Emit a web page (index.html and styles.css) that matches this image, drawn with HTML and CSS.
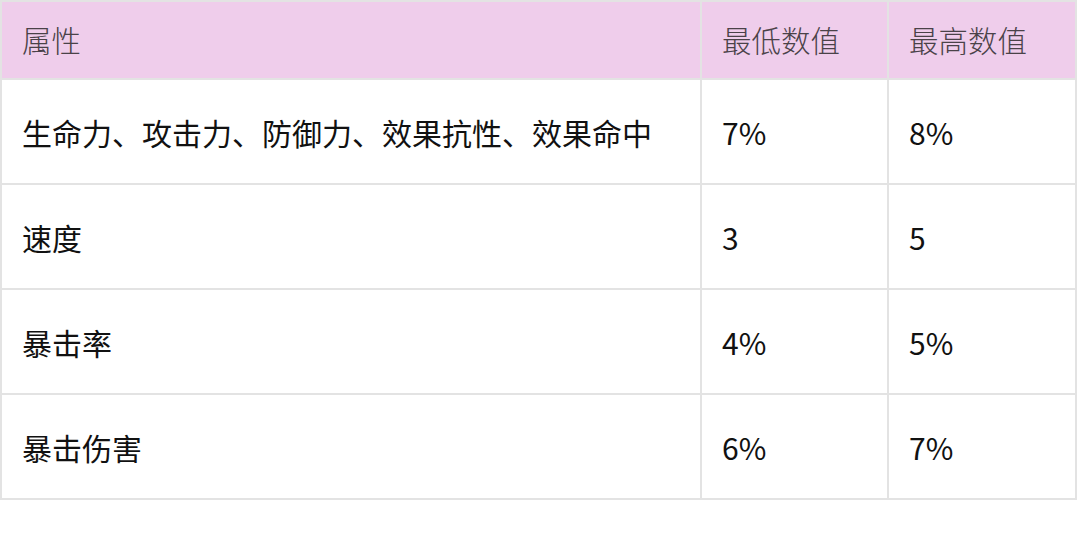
FILE: index.html
```html
<!DOCTYPE html>
<html lang="zh-CN">
<head>
<meta charset="utf-8">
<title>属性</title>
<link rel="stylesheet" href="styles.css">
</head>
<body>
<table class="stats">
  <colgroup>
    <col class="c1"><col class="c2"><col class="c3">
  </colgroup>
  <thead>
    <tr><th>属性</th><th>最低数值</th><th>最高数值</th></tr>
  </thead>
  <tbody>
    <tr><td>生命力、攻击力、防御力、效果抗性、效果命中</td><td>7%</td><td>8%</td></tr>
    <tr><td>速度</td><td>3</td><td>5</td></tr>
    <tr><td>暴击率</td><td>4%</td><td>5%</td></tr>
    <tr><td>暴击伤害</td><td>6%</td><td>7%</td></tr>
  </tbody>
</table>
</body>
</html>
```
FILE: styles.css
```css
html, body {
  margin: 0;
  padding: 0;
  background: #ffffff;
}
.stats {
  border-collapse: separate;
  border-spacing: 2px;
  background: #e3e3e3;
  width: 1077px;
  table-layout: fixed;
  font-family: "Noto Sans CJK SC", "Noto Sans", sans-serif;
}
.c1 { width: 698px; }
.c2 { width: 185px; }
.c3 { width: 186px; }
.stats th, .stats td {
  padding: 0 0 0 20px;
  text-align: left;
  vertical-align: middle;
  line-height: 1;
}
.stats th {
  height: 76px;
  background: #efcdeb;
  color: #4a4248;
  font-size: 29.5px;
  font-weight: 300;
}
.stats td {
  height: 103px;
  background: #ffffff;
  color: #111111;
  font-size: 30px;
  font-weight: 400;
}
```
